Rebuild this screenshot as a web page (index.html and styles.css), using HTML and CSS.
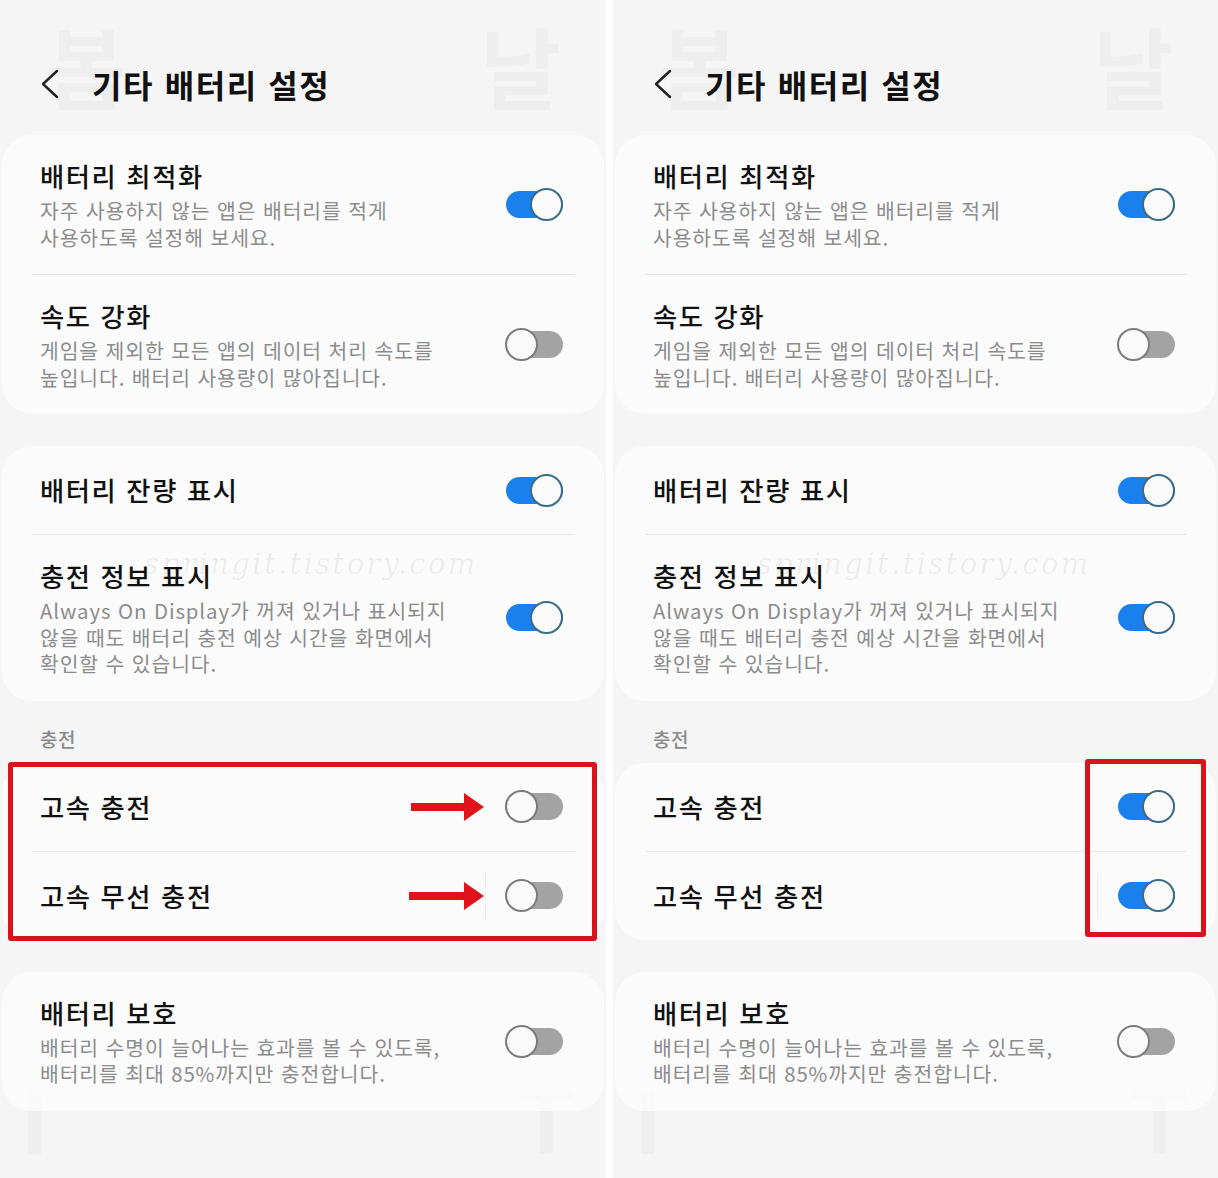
FILE: index.html
```html
<!DOCTYPE html>
<html lang="ko">
<head>
<meta charset="utf-8">
<title>기타 배터리 설정</title>
<link rel="stylesheet" href="styles.css">
</head>
<body>
<div class="page">
  <!-- LEFT PANEL -->
  <section class="panel panel-left">
    <div class="bg-glyph g-bom">봄</div>
    <div class="bg-glyph g-nal">날</div>
    <div class="bg-glyph g-i">I</div>
    <div class="bg-glyph g-t">T</div>

    <header class="header">
      <svg class="back" width="20" height="30" viewBox="0 0 20 30"><path d="M17 2 L3 15 L17 28" fill="none" stroke="#222" stroke-width="2.4" stroke-linecap="round" stroke-linejoin="round"/></svg>
      <h1 class="page-title">기타 배터리 설정</h1>
    </header>

    <div class="card">
      <div class="row">
        <div class="row-text">
          <div class="title">배터리 최적화</div>
          <div class="sub">자주 사용하지 않는 앱은 배터리를 적게<br>사용하도록 설정해 보세요.</div>
        </div>
        <div class="toggle on"><span class="thumb"></span></div>
      </div>
      <div class="divider"></div>
      <div class="row">
        <div class="row-text">
          <div class="title">속도 강화</div>
          <div class="sub">게임을 제외한 모든 앱의 데이터 처리 속도를<br>높입니다. 배터리 사용량이 많아집니다.</div>
        </div>
        <div class="toggle off"><span class="thumb"></span></div>
      </div>
    </div>

    <div class="card">
      <div class="row single">
        <div class="row-text"><div class="title">배터리 잔량 표시</div></div>
        <div class="toggle on"><span class="thumb"></span></div>
      </div>
      <div class="divider"></div>
      <div class="row">
        <div class="row-text">
          <div class="title">충전 정보 표시</div>
          <div class="sub">Always On Display가 꺼져 있거나 표시되지<br>않을 때도 배터리 충전 예상 시간을 화면에서<br>확인할 수 있습니다.</div>
        </div>
        <div class="toggle on"><span class="thumb"></span></div>
      </div>
    </div>

    <div class="section-label">충전</div>

    <div class="card">
      <div class="row single">
        <div class="row-text"><div class="title">고속 충전</div></div>
        <svg class="arrow" width="76" height="30" viewBox="0 0 76 30"><rect x="2" y="11" width="56" height="8" fill="#e0121a"/><polygon points="55,1 75,15 55,29" fill="#e0121a"/></svg>
        <div class="toggle off"><span class="thumb"></span></div>
      </div>
      <div class="divider"></div>
      <div class="row single">
        <div class="row-text"><div class="title">고속 무선 충전</div></div>
        <svg class="arrow arrow-sep" width="76" height="30" viewBox="0 0 76 30"><rect x="0" y="11" width="58" height="8" fill="#e0121a"/><polygon points="55,1 75,15 55,29" fill="#e0121a"/></svg>
        <span class="vsep"></span>
        <div class="toggle off"><span class="thumb"></span></div>
      </div>
    </div>

    <div class="card">
      <div class="row">
        <div class="row-text">
          <div class="title">배터리 보호</div>
          <div class="sub">배터리 수명이 늘어나는 효과를 볼 수 있도록,<br>배터리를 최대 85%까지만 충전합니다.</div>
        </div>
        <div class="toggle off"><span class="thumb"></span></div>
      </div>
    </div>

    <div class="watermark">springit.tistory.com</div>
    <div class="red-box box-left"></div>
  </section>

  <!-- RIGHT PANEL -->
  <section class="panel panel-right">
    <div class="bg-glyph g-bom">봄</div>
    <div class="bg-glyph g-nal">날</div>
    <div class="bg-glyph g-i">I</div>
    <div class="bg-glyph g-t">T</div>

    <header class="header">
      <svg class="back" width="20" height="30" viewBox="0 0 20 30"><path d="M17 2 L3 15 L17 28" fill="none" stroke="#222" stroke-width="2.4" stroke-linecap="round" stroke-linejoin="round"/></svg>
      <h1 class="page-title">기타 배터리 설정</h1>
    </header>

    <div class="card">
      <div class="row">
        <div class="row-text">
          <div class="title">배터리 최적화</div>
          <div class="sub">자주 사용하지 않는 앱은 배터리를 적게<br>사용하도록 설정해 보세요.</div>
        </div>
        <div class="toggle on"><span class="thumb"></span></div>
      </div>
      <div class="divider"></div>
      <div class="row">
        <div class="row-text">
          <div class="title">속도 강화</div>
          <div class="sub">게임을 제외한 모든 앱의 데이터 처리 속도를<br>높입니다. 배터리 사용량이 많아집니다.</div>
        </div>
        <div class="toggle off"><span class="thumb"></span></div>
      </div>
    </div>

    <div class="card">
      <div class="row single">
        <div class="row-text"><div class="title">배터리 잔량 표시</div></div>
        <div class="toggle on"><span class="thumb"></span></div>
      </div>
      <div class="divider"></div>
      <div class="row">
        <div class="row-text">
          <div class="title">충전 정보 표시</div>
          <div class="sub">Always On Display가 꺼져 있거나 표시되지<br>않을 때도 배터리 충전 예상 시간을 화면에서<br>확인할 수 있습니다.</div>
        </div>
        <div class="toggle on"><span class="thumb"></span></div>
      </div>
    </div>

    <div class="section-label">충전</div>

    <div class="card">
      <div class="row single">
        <div class="row-text"><div class="title">고속 충전</div></div>
        <div class="toggle on"><span class="thumb"></span></div>
      </div>
      <div class="divider"></div>
      <div class="row single">
        <div class="row-text"><div class="title">고속 무선 충전</div></div>
        <span class="vsep"></span>
        <div class="toggle on"><span class="thumb"></span></div>
      </div>
    </div>

    <div class="card">
      <div class="row">
        <div class="row-text">
          <div class="title">배터리 보호</div>
          <div class="sub">배터리 수명이 늘어나는 효과를 볼 수 있도록,<br>배터리를 최대 85%까지만 충전합니다.</div>
        </div>
        <div class="toggle off"><span class="thumb"></span></div>
      </div>
    </div>

    <div class="watermark">springit.tistory.com</div>
    <div class="red-box box-right"></div>
  </section>
</div>
</body>
</html>
```

FILE: styles.css
```css
* { box-sizing: border-box; }
html, body { margin: 0; padding: 0; background: #ffffff; }
body {
  font-family: "Noto Sans CJK KR", "Noto Sans", "Liberation Sans", sans-serif;
  color: #111;
}
.page {
  display: flex;
  gap: 7px;
  width: 1218px;
  height: 1178px;
  overflow: hidden;
}
.panel {
  position: relative;
  height: 1178px;
  background: #f5f5f5;
  display: flex;
  flex-direction: column;
  overflow: hidden;
}
.panel-left { width: 606px; }
.panel-right { width: 605px; }

/* faint background glyph watermarks */
.bg-glyph {
  position: absolute;
  z-index: 0;
  font-weight: 700;
  color: rgba(0, 0, 0, 0.028);
  line-height: 1;
  pointer-events: none;
}
.g-bom { left: 46px; top: 20px; font-size: 88px; }
.g-nal { left: 480px; top: 20px; font-size: 88px; }
.g-i { left: 22px; top: 1076px; font-size: 92px; font-family: "Liberation Sans", sans-serif; }
.g-t { left: 518px; top: 1076px; font-size: 92px; font-family: "Liberation Sans", sans-serif; }

.header {
  position: relative;
  z-index: 1;
  height: 44px;
  margin: 62px 0 29px;
  padding-left: 40px;
  display: flex;
  align-items: center;
}
.back { display: block; flex: none; }
.page-title {
  margin: 0 0 0 32px;
  font-size: 32px;
  line-height: 44px;
  font-weight: 700;
  letter-spacing: 1.6px;
  color: #111;
}

.card {
  position: relative;
  z-index: 1;
  margin: 0 2px;
  background: rgba(255, 255, 255, 0.62);
  border-radius: 30px;
}
.card + .card { margin-top: 32px; }

.row {
  display: flex;
  align-items: center;
  padding: 24px 41px 24px 38px;
}
.row.single { padding-top: 27px; padding-bottom: 27px; }
.row-text { flex: 1; min-width: 0; }
.title {
  font-size: 26.3px;
  line-height: 34px;
  font-weight: 500;
  letter-spacing: 1.6px;
  color: #111;
  white-space: nowrap;
}
.sub {
  margin-top: 4px;
  font-size: 20.4px;
  line-height: 26.5px;
  letter-spacing: 0.9px;
  color: #8c8c8c;
  white-space: nowrap;
}
.divider {
  height: 1px;
  margin: 0 29px 0 30px;
  background: #e7e7e7;
}

.section-label {
  position: relative;
  z-index: 1;
  margin: 25px 0 11px;
  padding-left: 40px;
  font-size: 19px;
  line-height: 26px;
  font-weight: 500;
  letter-spacing: 0.5px;
  color: #8a8a8a;
}

/* toggles */
.toggle {
  flex: none;
  width: 57px;
  height: 27px;
  border-radius: 14px;
  display: flex;
  align-items: center;
}
.toggle .thumb {
  flex: none;
  width: 33px;
  height: 33px;
  border-radius: 50%;
  background: #fafafa;
}
.toggle.on { background: #1a80ee; justify-content: flex-end; }
.toggle.on .thumb { border: 2px solid #3a6c88; }
.toggle.off { background: #a3a3a3; justify-content: flex-start; }
.toggle.off .thumb { border: 2px solid #7c7c7c; margin-left: -1px; }

.arrow { flex: none; display: block; margin-right: 21px; }
.arrow-sep { margin-right: 0; }
.vsep {
  flex: none;
  width: 1px;
  height: 46px;
  margin: -6px 20px -6px 0;
  background: #ececec;
}

.watermark {
  position: absolute;
  z-index: 2;
  left: 144px;
  top: 547px;
  font-family: "DejaVu Serif", "Liberation Serif", serif;
  font-style: italic;
  font-size: 29px;
  letter-spacing: 2.4px;
  color: rgba(0, 0, 0, 0.06);
  pointer-events: none;
  white-space: nowrap;
}

.red-box {
  position: absolute;
  z-index: 3;
  border: 5px solid #d9131b;
  border-radius: 3px;
  pointer-events: none;
}
.box-left { left: 8px; top: 762px; width: 589px; height: 179px; }
.box-right { left: 472px; top: 759px; width: 121px; height: 178px; }
```
